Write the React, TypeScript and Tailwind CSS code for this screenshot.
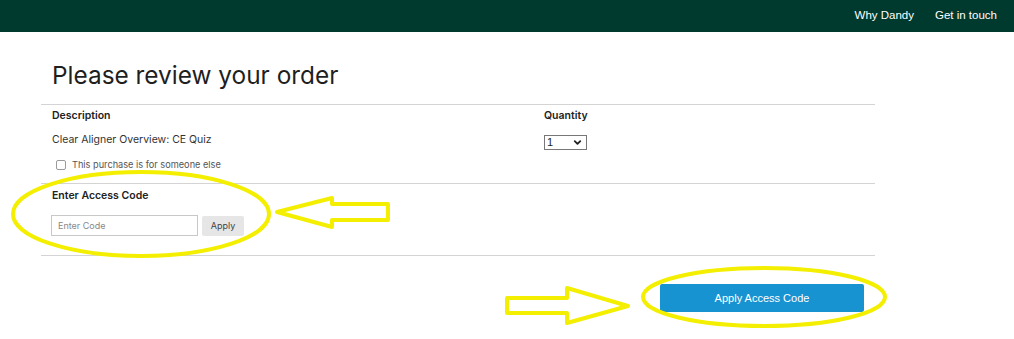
import { ChevronDown } from "lucide-react";

const NAV_LINKS = ["Why Dandy", "Get in touch"];

export default function App() {
  return (
    <div className="relative w-[1014px] h-[339px] bg-white overflow-hidden font-['Inter',sans-serif] text-[#222]">
      <header className="h-8 bg-[#003a2e] flex items-center justify-end pr-[17px] gap-[21px]">
        {NAV_LINKS.map((label) => (
          <a
            key={label}
            href="#"
            className="text-white text-[11.5px] font-['Liberation_Sans',Arial,sans-serif]"
          >
            {label}
          </a>
        ))}
      </header>

      <main className="ml-[41px] w-[834px]">
        <h1 className="pl-[11px] pt-[27px] pb-[12px] text-[24.4px] leading-[33px] text-[#1f1f1f] font-normal">
          Please review your order
        </h1>

        {/* order line */}
        <section className="border-t border-[#d4d4d4] pl-[11px] pt-[1px] pb-[12px]">
          <div className="flex">
            <div className="w-[492px]">
              <div className="text-[10.5px] font-semibold leading-[20px]">Description</div>
              <div className="text-[10.5px] leading-[14px] mt-[7px] text-[#333]">
                Clear Aligner Overview: CE Quiz
              </div>
              <label className="flex items-center gap-[6px] mt-[12px] ml-[4px]">
                <span className="w-[10px] h-[10px] border border-[#9a9a9a] rounded-[2px] bg-white" />
                <span className="text-[9.2px] text-[#555] leading-[12px]">
                  This purchase is for someone else
                </span>
              </label>
            </div>
            <div>
              <div className="text-[10.5px] font-semibold leading-[20px]">Quantity</div>
              <div className="relative mt-[9px] w-[43px] h-[15px] border border-[#777] bg-white flex items-center pl-[2px]">
                <span className="text-[11px] leading-none font-['Liberation_Sans',Arial,sans-serif]">1</span>
                <ChevronDown size={11} strokeWidth={4} className="absolute right-[3px] top-[1px]" />
              </div>
            </div>
          </div>
        </section>

        {/* access code */}
        <section className="border-t border-b border-[#d4d4d4] pl-[10px] pt-[2px] pb-[19px]">
          <div className="pl-[1px] text-[10.5px] font-semibold leading-[20px]">Enter Access Code</div>
          <div className="flex items-center gap-[4px] mt-[9px]">
            <input
              placeholder="Enter Code"
              className="w-[147px] h-[21px] border border-[#c8c8c8] px-[6px] text-[9px] placeholder:text-[#888] outline-none"
            />
            <button className="w-[42px] h-[20px] bg-[#e6e6e6] text-[9px] text-[#444] rounded-[2px]">
              Apply
            </button>
          </div>
        </section>

        <div className="flex justify-end pr-[11px] pt-[28px]">
          <button className="w-[204px] h-[28px] bg-[#1893d2] rounded-[2px] text-white text-[11px] font-['Liberation_Sans',Arial,sans-serif]">
            Apply Access Code
          </button>
        </div>
      </main>

      {/* yellow annotations drawn over the screenshot */}
      <svg
        className="absolute inset-0 pointer-events-none"
        width={1014}
        height={339}
        viewBox="0 0 1014 339"
        fill="none"
        stroke="#f4ef00"
        strokeWidth={4}
        strokeLinejoin="round"
      >
        <ellipse cx={141} cy={214} rx={128} ry={42} />
        <path d="M277 212 L332 198 L332 204 L388 204 L388 220 L332 220 L332 227 Z" />
        <path d="M507 298 L567 298 L567 288 L628 306 L567 323 L567 313 L507 313 Z" />
        <ellipse cx={764} cy={297} rx={121} ry={29} />
      </svg>
    </div>
  );
}
